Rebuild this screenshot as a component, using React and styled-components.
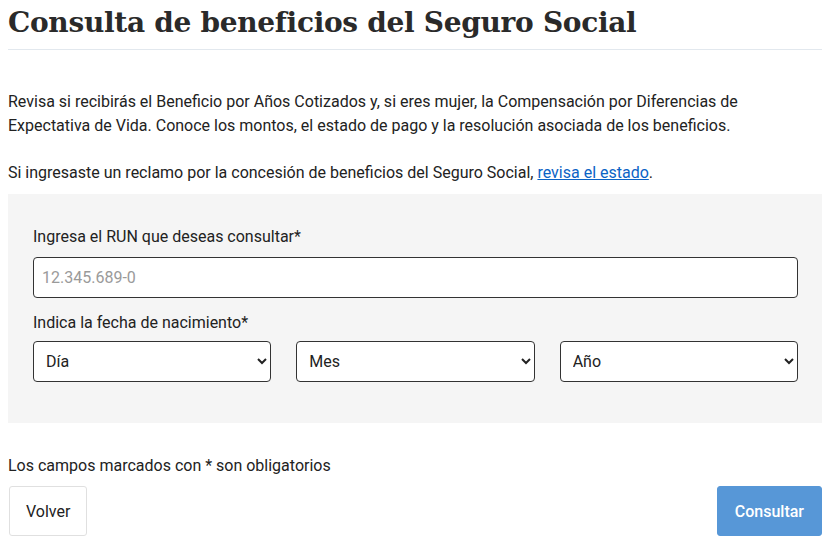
import React from 'react';
import styled, { createGlobalStyle } from 'styled-components';

const GlobalStyle = createGlobalStyle`
  body {
    margin: 8px;
    background: #fff;
    font-family: Roboto, "Liberation Sans", Arial, sans-serif;
    color: #222;
  }
`;

const Page = styled.div`
  display: flex;
  flex-direction: column;
  padding-right: 1px;
`;

const Title = styled.h1`
  margin: 0;
  margin-top: -6px;
  padding: 0 0 6px;
  font-family: "DejaVu Serif", "Liberation Serif", serif;
  font-weight: 700;
  font-size: 28px;
  line-height: 41px;
  color: #2a2a2a;
  border-bottom: 1px solid #e2e8ee;
  letter-spacing: -0.3px;
`;

const Text = styled.p`
  margin: ${(p) => p.$top || 0}px 0 0;
  font-size: 16px;
  line-height: 24px;
  color: #222;
`;

const Link = styled.a`
  color: #0b63c5;
  text-decoration: underline;
`;

const Panel = styled.div`
  margin-top: 9px;
  background: #f5f5f5;
  padding: 31px 24px 41px 25px;
  display: flex;
  flex-direction: column;
`;

const Label = styled.label`
  font-size: 16px;
  line-height: 24px;
  color: #222;
  margin: ${(p) => p.$top || 0}px 0 ${(p) => p.$bottom || 8}px;
`;

const Input = styled.input`
  box-sizing: border-box;
  height: 41px;
  width: 100%;
  border: 1px solid #333;
  border-radius: 4px;
  padding: 0 8px;
  font-family: Roboto, "Liberation Sans", Arial, sans-serif;
  font-size: 16px;
  background: #fff;
  &::placeholder {
    color: #9a9a9a;
  }
`;

const SelectRow = styled.div`
  display: grid;
  grid-template-columns: repeat(3, 1fr);
  gap: 25px;
`;

const Select = styled.select`
  box-sizing: border-box;
  height: 41px;
  width: 100%;
  border: 1px solid #333;
  border-radius: 4px;
  padding: 0 8px;
  font-family: Roboto, "Liberation Sans", Arial, sans-serif;
  font-size: 16px;
  color: #222;
  background: #fff;
`;

const Footer = styled.div`
  margin-top: 31px;
  display: flex;
  flex-direction: column;
`;

const Buttons = styled.div`
  margin-top: 8px;
  display: flex;
  justify-content: space-between;
  align-items: center;
`;

const Button = styled.button`
  height: 50px;
  box-sizing: border-box;
  padding: 0 ${(p) => (p.$primary ? 17 : 16)}px;
  border-radius: 3px;
  font-family: Roboto, "Liberation Sans", Arial, sans-serif;
  font-size: 16px;
  font-weight: ${(p) => (p.$primary ? 500 : 400)};
  color: ${(p) => (p.$primary ? '#fff' : '#222')};
  background: ${(p) => (p.$primary ? '#5797d7' : '#fff')};
  border: 1px solid ${(p) => (p.$primary ? '#5797d7' : '#e0e0e0')};
  margin-left: ${(p) => (p.$primary ? 0 : 1)}px;
  cursor: pointer;
`;

export default function App() {
  return (
    <>
      <GlobalStyle />
      <Page>
        <Title>Consulta de beneficios del Seguro Social</Title>
        <Text $top={40}>
          Revisa si recibirás el Beneficio por Años Cotizados y, si eres mujer, la Compensación por Diferencias de
          Expectativa de Vida. Conoce los montos, el estado de pago y la resolución asociada de los beneficios.
        </Text>
        <Text $top={23}>
          Si ingresaste un reclamo por la concesión de beneficios del Seguro Social, <Link href="#">revisa el estado</Link>.
        </Text>
        <Panel>
          <Label>Ingresa el RUN que deseas consultar*</Label>
          <Input placeholder="12.345.689-0" />
          <Label $top={13} $bottom={6}>Indica la fecha de nacimiento*</Label>
          <SelectRow>
            <Select defaultValue="">
              <option value="">Día</option>
            </Select>
            <Select defaultValue="">
              <option value="">Mes</option>
            </Select>
            <Select defaultValue="">
              <option value="">Año</option>
            </Select>
          </SelectRow>
        </Panel>
        <Footer>
          <Text>Los campos marcados con * son obligatorios</Text>
          <Buttons>
            <Button>Volver</Button>
            <Button $primary>Consultar</Button>
          </Buttons>
        </Footer>
      </Page>
    </>
  );
}
